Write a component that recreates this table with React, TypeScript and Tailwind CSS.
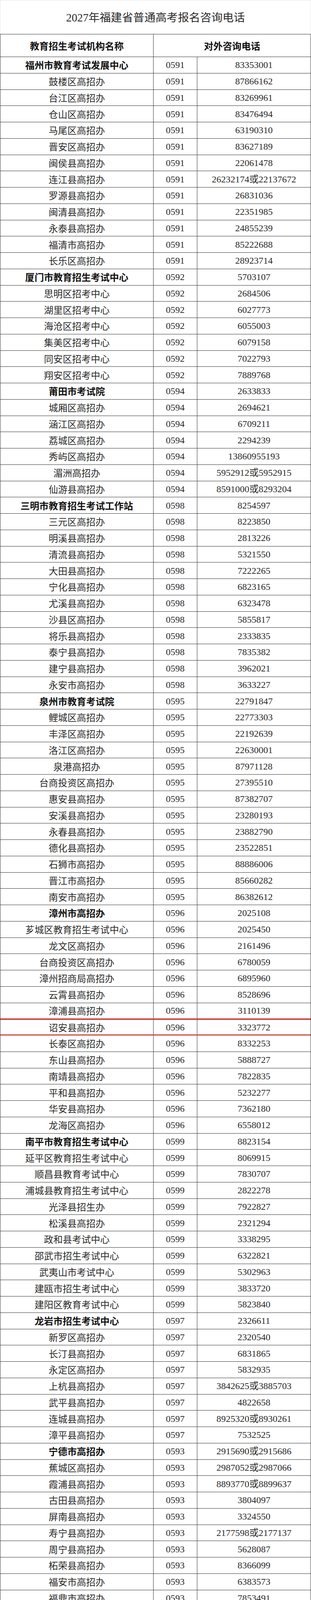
import React from "react";

// 一行数据: 名称, 区号, 电话, 是否市级(加粗), 是否标红
type Row = { name: string; code: string; phone: string; bold?: boolean; mark?: boolean };

const rows: Row[] = [
  // 福州
  { name: "福州市教育考试发展中心", code: "0591", phone: "83353001", bold: true },
  { name: "鼓楼区高招办", code: "0591", phone: "87866162" },
  { name: "台江区高招办", code: "0591", phone: "83269961" },
  { name: "仓山区高招办", code: "0591", phone: "83476494" },
  { name: "马尾区高招办", code: "0591", phone: "63190310" },
  { name: "晋安区高招办", code: "0591", phone: "83627189" },
  { name: "闽侯县高招办", code: "0591", phone: "22061478" },
  { name: "连江县高招办", code: "0591", phone: "26232174或22137672" },
  { name: "罗源县高招办", code: "0591", phone: "26831036" },
  { name: "闽清县高招办", code: "0591", phone: "22351985" },
  { name: "永泰县高招办", code: "0591", phone: "24855239" },
  { name: "福清市高招办", code: "0591", phone: "85222688" },
  { name: "长乐区高招办", code: "0591", phone: "28923714" },
  // 厦门
  { name: "厦门市教育招生考试中心", code: "0592", phone: "5703107", bold: true },
  { name: "思明区招考中心", code: "0592", phone: "2684506" },
  { name: "湖里区招考中心", code: "0592", phone: "6027773" },
  { name: "海沧区招考中心", code: "0592", phone: "6055003" },
  { name: "集美区招考中心", code: "0592", phone: "6079158" },
  { name: "同安区招考中心", code: "0592", phone: "7022793" },
  { name: "翔安区招考中心", code: "0592", phone: "7889768" },
  // 莆田
  { name: "莆田市考试院", code: "0594", phone: "2633833", bold: true },
  { name: "城厢区高招办", code: "0594", phone: "2694621" },
  { name: "涵江区高招办", code: "0594", phone: "6709211" },
  { name: "荔城区高招办", code: "0594", phone: "2294239" },
  { name: "秀屿区高招办", code: "0594", phone: "13860955193" },
  { name: "湄洲高招办", code: "0594", phone: "5952912或5952915" },
  { name: "仙游县高招办", code: "0594", phone: "8591000或8293204" },
  // 三明
  { name: "三明市教育招生考试工作站", code: "0598", phone: "8254597", bold: true },
  { name: "三元区高招办", code: "0598", phone: "8223850" },
  { name: "明溪县高招办", code: "0598", phone: "2813226" },
  { name: "清流县高招办", code: "0598", phone: "5321550" },
  { name: "大田县高招办", code: "0598", phone: "7222265" },
  { name: "宁化县高招办", code: "0598", phone: "6823165" },
  { name: "尤溪县高招办", code: "0598", phone: "6323478" },
  { name: "沙县区高招办", code: "0598", phone: "5855817" },
  { name: "将乐县高招办", code: "0598", phone: "2333835" },
  { name: "泰宁县高招办", code: "0598", phone: "7835382" },
  { name: "建宁县高招办", code: "0598", phone: "3962021" },
  { name: "永安市高招办", code: "0598", phone: "3633227" },
  // 泉州
  { name: "泉州市教育考试院", code: "0595", phone: "22791847", bold: true },
  { name: "鲤城区高招办", code: "0595", phone: "22773303" },
  { name: "丰泽区高招办", code: "0595", phone: "22192639" },
  { name: "洛江区高招办", code: "0595", phone: "22630001" },
  { name: "泉港高招办", code: "0595", phone: "87971128" },
  { name: "台商投资区高招办", code: "0595", phone: "27395510" },
  { name: "惠安县高招办", code: "0595", phone: "87382707" },
  { name: "安溪县高招办", code: "0595", phone: "23280193" },
  { name: "永春县高招办", code: "0595", phone: "23882790" },
  { name: "德化县高招办", code: "0595", phone: "23522851" },
  { name: "石狮市高招办", code: "0595", phone: "88886006" },
  { name: "晋江市高招办", code: "0595", phone: "85660282" },
  { name: "南安市高招办", code: "0595", phone: "86382612" },
  // 漳州
  { name: "漳州市高招办", code: "0596", phone: "2025108", bold: true },
  { name: "芗城区教育招生考试中心", code: "0596", phone: "2025450" },
  { name: "龙文区高招办", code: "0596", phone: "2161496" },
  { name: "台商投资区高招办", code: "0596", phone: "6780059" },
  { name: "漳州招商局高招办", code: "0596", phone: "6895960" },
  { name: "云霄县高招办", code: "0596", phone: "8528696" },
  { name: "漳浦县高招办", code: "0596", phone: "3110139" },
  { name: "诏安县高招办", code: "0596", phone: "3323772", mark: true },
  { name: "长泰区高招办", code: "0596", phone: "8332253" },
  { name: "东山县高招办", code: "0596", phone: "5888727" },
  { name: "南靖县高招办", code: "0596", phone: "7822835" },
  { name: "平和县高招办", code: "0596", phone: "5232277" },
  { name: "华安县高招办", code: "0596", phone: "7362180" },
  { name: "龙海区高招办", code: "0596", phone: "6558012" },
  // 南平
  { name: "南平市教育招生考试中心", code: "0599", phone: "8823154", bold: true },
  { name: "延平区教育招生考试中心", code: "0599", phone: "8069915" },
  { name: "顺昌县教育考试中心", code: "0599", phone: "7830707" },
  { name: "浦城县教育招生考试中心", code: "0599", phone: "2822278" },
  { name: "光泽县招生办", code: "0599", phone: "7922827" },
  { name: "松溪县高招办", code: "0599", phone: "2321294" },
  { name: "政和县考试中心", code: "0599", phone: "3338295" },
  { name: "邵武市招生考试中心", code: "0599", phone: "6322821" },
  { name: "武夷山市考试中心", code: "0599", phone: "5302963" },
  { name: "建瓯市招生考试中心", code: "0599", phone: "3833720" },
  { name: "建阳区教育考试中心", code: "0599", phone: "5823840" },
  // 龙岩
  { name: "龙岩市招生考试中心", code: "0597", phone: "2326611", bold: true },
  { name: "新罗区高招办", code: "0597", phone: "2320540" },
  { name: "长汀县高招办", code: "0597", phone: "6831865" },
  { name: "永定区高招办", code: "0597", phone: "5832935" },
  { name: "上杭县高招办", code: "0597", phone: "3842625或3885703" },
  { name: "武平县高招办", code: "0597", phone: "4822658" },
  { name: "连城县高招办", code: "0597", phone: "8925320或8930261" },
  { name: "漳平县高招办", code: "0597", phone: "7532525" },
  // 宁德
  { name: "宁德市高招办", code: "0593", phone: "2915690或2915686", bold: true },
  { name: "蕉城区高招办", code: "0593", phone: "2987052或2987066" },
  { name: "霞浦县高招办", code: "0593", phone: "8893770或8899637" },
  { name: "古田县高招办", code: "0593", phone: "3804097" },
  { name: "屏南县高招办", code: "0593", phone: "3324550" },
  { name: "寿宁县高招办", code: "0593", phone: "2177598或2177137" },
  { name: "周宁县高招办", code: "0593", phone: "5628087" },
  { name: "柘荣县高招办", code: "0593", phone: "8366099" },
  { name: "福安市高招办", code: "0593", phone: "6383573" },
  { name: "福鼎市高招办", code: "0593", phone: "7853491" },
  // 平潭
  { name: "平潭综合试验区教育考试院", code: "0591", phone: "23151533", bold: true },
];

const cjk = "font-['Noto_Sans_CJK_SC',sans-serif]";
const num = "font-['Liberation_Serif','Noto_Sans_CJK_SC',serif]";
const cell = "flex items-center justify-center overflow-hidden text-[24px] leading-none";

export default function App() {
  return (
    <div className="w-[796px] bg-white text-[#2a2a2a]">
      {/* 标题 */}
      <div className="flex h-[87px] items-center justify-center border-x border-t border-[#e2e2e2] pt-[5px]">
        <h1 className={`${num} text-[28.6px] leading-none`}>2027年福建省普通高考报名咨询电话</h1>
      </div>

      {/* 表头 */}
      <div className="flex h-[59px] border border-[#333]">
        <div className={`${cjk} ${cell} w-[392px] shrink-0 border-r border-[#333] font-bold text-[#111]`}>
          教育招生考试机构名称
        </div>
        <div className={`${cjk} ${cell} flex-1 font-bold text-[#111]`}>对外咨询电话</div>
      </div>

      {/* 表体: 固定行高的网格 */}
      <div className="grid auto-rows-[41.75px] grid-cols-[392px_112px_1fr] border-x border-[#333]">
        {rows.map((r, i) => {
          const before = rows[i + 1]?.mark;
          const line = r.mark
            ? "border-t-2 border-b-[3px] border-t-[#d4483f] border-b-[#d4483f]"
            : before
              ? "border-b-2 border-b-[#d4483f]"
              : "border-b border-b-[#333]";
          return (
            <React.Fragment key={i}>
              <div className={`${cjk} ${cell} ${line} border-r border-r-[#333] ${r.bold ? "font-bold text-[#111]" : ""}`}>
                {r.name}
              </div>
              <div className={`${num} ${cell} ${line} border-r border-r-[#333]`}>{r.code}</div>
              <div className={`${num} ${cell} ${line}`}>{r.phone}</div>
            </React.Fragment>
          );
        })}
      </div>
    </div>
  );
}
